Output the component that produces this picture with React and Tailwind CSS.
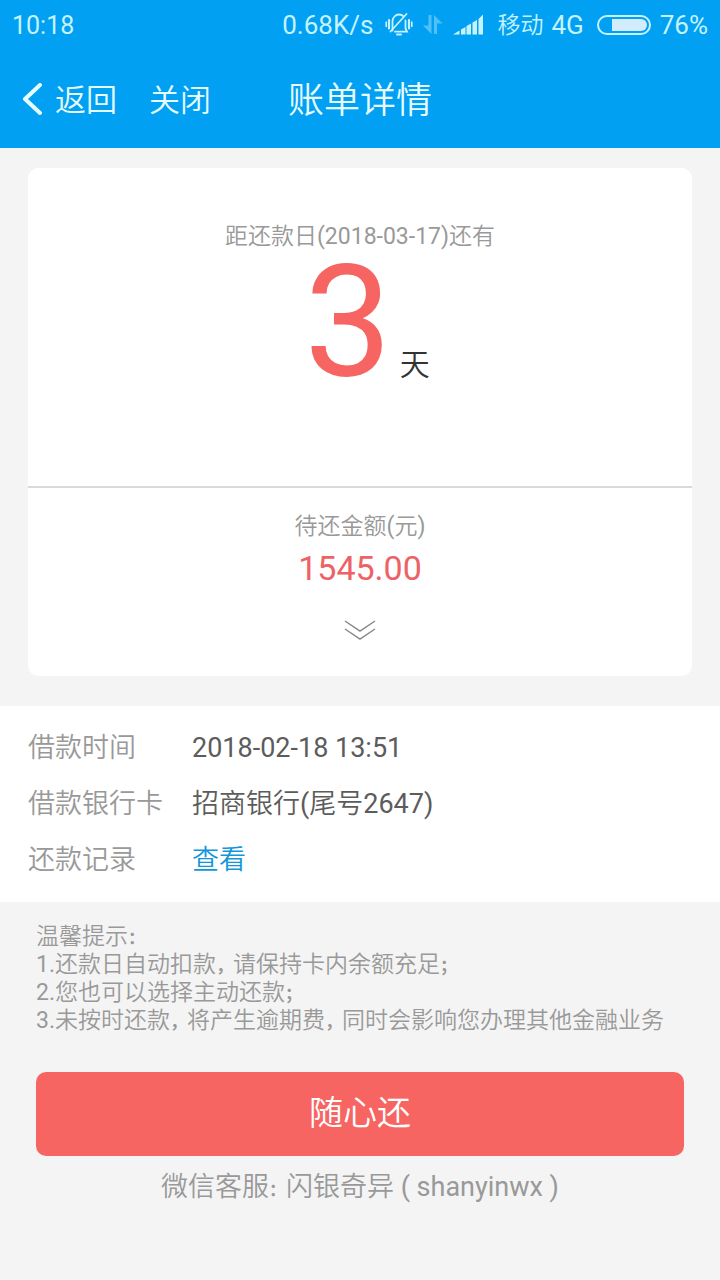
import React from "react";

function MutedBell() {
  return (
    <svg className="h-7 w-7" viewBox="0 0 28 28" fill="none" stroke="currentColor" strokeWidth="1.8" strokeLinecap="round" aria-hidden="true">
      <path d="M7.500 19.500V10.500C7.500 6.500 10.500 3.500 14 3.500c2 0 3.500.7 4.600 1.800M20.500 9.500v8l1.500 3.200H10" />
      <path d="M5.500 20.500 21.500 3" />
      <path d="M12 23.500h4" strokeWidth="2" />
      <path d="M4 9v8.500M24 9v8.500" strokeWidth="2.200" />
      <path d="M1.200 11v4.500M26.800 11v4.500" strokeWidth="1.600" />
    </svg>
  );
}

function DataArrows() {
  return (
    <svg className="h-6 w-6 opacity-40" viewBox="0 0 24 24" fill="currentColor" aria-hidden="true">
      <path d="M7.500 2h3v19L2 12.500h5.500zM13 21V2l8.500 8.500H16V21z" />
    </svg>
  );
}

function Signal() {
  return (
    <svg className="h-6 w-8" viewBox="0 0 32 24" fill="currentColor" aria-hidden="true">
      <path d="M0 21.500 6.500 17.500V21.500zM8 16.500l4.500-2.500V21.500H8zM13.500 13l4.500-2.500V21.500h-4.500zM19.500 9.500l4.500-2.500V21.500h-4.500zM25.500 6l4.500-4.500v20h-4.500z" />
    </svg>
  );
}

function Battery() {
  return (
    <svg className="h-5 w-14" viewBox="0 0 56 20" fill="none" aria-hidden="true">
      <rect x="2" y="1" width="52" height="18" rx="9" stroke="currentColor" strokeWidth="2" />
      <path d="M16 4h29a6 6 0 0 1 0 12H16z" fill="#d2ecfb" />
    </svg>
  );
}

function StatusBar() {
  return (
    <div className="flex h-12 items-center justify-between px-3 pt-[2px] text-[26px] leading-none text-[#c5f3fd]">
      <span className="text-[25px]">10:18</span>
      <div className="flex items-center gap-2">
        <span className="mr-1">0.68K/s</span>
        <MutedBell />
        <DataArrows />
        <Signal />
        <span className="ml-1 text-[23px]">移动</span>
        <span>4G</span>
        <div className="ml-1 flex items-center gap-2">
          <Battery />
          <span>76%</span>
        </div>
      </div>
    </div>
  );
}

function Header() {
  return (
    <header className="bg-[#01a0f2]">
      <StatusBar />
      <div className="grid h-[100px] grid-cols-[1fr_auto_1fr] items-center px-5 pt-[6px] text-[#e6fcff]">
        <nav className="flex items-center gap-8 text-[31px]">
          <button type="button" className="flex items-center gap-[11px]">
            <svg className="h-9 w-6" viewBox="0 0 24 36" fill="none" stroke="currentColor" strokeWidth="4" strokeLinecap="round" strokeLinejoin="round" aria-hidden="true">
              <path d="M20 2 5 16l15 14" />
            </svg>
            返回
          </button>
          <button type="button">关闭</button>
        </nav>
        <h1 className="text-4xl">账单详情</h1>
      </div>
    </header>
  );
}

const P = ({ children }) => (
  <span className="font-['Noto_Sans_CJK_SC',sans-serif] text-[17px] font-bold leading-none">{children}</span>
);

const details = [
  { label: "借款时间", value: "2018-02-18 13:51" },
  { label: "借款银行卡", value: "招商银行(尾号2647)" },
  { label: "还款记录", value: <a href="#records" className="text-[#1296db]">查看</a> },
];

export default function App() {
  return (
    <div className="min-h-screen bg-[#f4f4f4] font-['Roboto','Noto_Sans_CJK_SC_DemiLight','Noto_Sans_CJK_SC_Light','Noto_Sans_CJK_SC',sans-serif] font-normal text-[#999999]">
      <Header />
      <main>
        <section className="mx-7 mt-5 rounded-[10px] bg-white text-center">
          <div className="h-[320px] border-b-2 border-[#d9d9d9] pt-[53px]">
            <p className="text-[23px] leading-8">距还款日(2018-03-17)还有</p>
            <p className="flex items-baseline justify-center gap-2 pl-[14px] text-[156px] leading-[138px] text-[#f76563]">
              3<span className="text-[30px] leading-none text-[#333333]">天</span>
            </p>
          </div>
          <div className="pt-[23px]">
            <p className="text-[23px] leading-8">待还金额(元)</p>
            <p className="text-[34px] leading-[50px] text-[#ee6164]">1545.00</p>
            <button type="button" aria-label="展开" className="flex h-[83px] w-full items-center justify-center pb-[10px]">
              <svg className="h-6 w-8" viewBox="0 0 32 24" fill="none" stroke="#888888" strokeWidth="1.500" aria-hidden="true">
                <path d="m1 3 15 10L31 3M1 11l15 10 15-10" />
              </svg>
            </button>
          </div>
        </section>

        <dl className="mt-[30px] bg-white px-7 py-[14px] text-[27px] leading-[56px]">
          {details.map((d) => (
            <div key={d.label} className="flex">
              <dt className="w-[164px] shrink-0">{d.label}</dt>
              <dd className="text-[#5c5c5c]">{d.value}</dd>
            </div>
          ))}
        </dl>

        <section className="px-9 pt-[21px] text-[23px] leading-7">
          <p>温馨提示<P>：</P></p>
          <p>1.还款日自动扣款<P>，</P>请保持卡内余额充足<P>；</P></p>
          <p>2.您也可以选择主动还款<P>；</P></p>
          <p>3.未按时还款<P>，</P>将产生逾期费<P>，</P>同时会影响您办理其他金融业务</p>
        </section>

        <div className="px-9 pt-[37px] text-center">
          <button type="button" className="h-[84px] w-full rounded-[10px] bg-[#f76563] pb-[2px] text-[34px] text-white">
            随心还
          </button>
          <p className="pt-2 text-[27px] leading-[46px]">微信客服<P>：</P>闪银奇异 ( shanyinwx )</p>
        </div>
      </main>
    </div>
  );
}
